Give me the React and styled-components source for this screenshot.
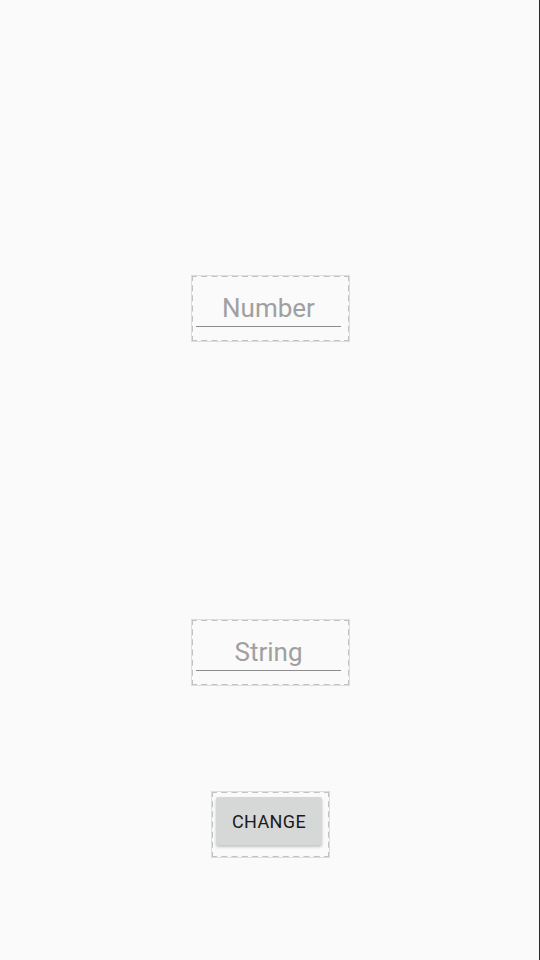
import React from "react";
import styled, { createGlobalStyle } from "styled-components";

const Global = createGlobalStyle`
  html, body { margin: 0; padding: 0; background: #fafafa; }
  body { font-family: Roboto, "Noto Sans", sans-serif; }
`;

const Screen = styled.div`
  width: 540px;
  height: 960px;
  box-sizing: border-box;
  padding-left: 2px;
  border-right: 1px solid #2a2a2a;
  background: #fafafa;
  display: flex;
  flex-direction: column;
  align-items: center;
`;

const Frame = styled.div`
  box-sizing: border-box;
  width: ${(p) => p.$w}px;
  height: 67px;
  margin-top: ${(p) => p.$top}px;
  padding-top: ${(p) => p.$pad}px;
  border: 2px dashed #c2c2c2;
  outline: 1px solid #dddddd;
  outline-offset: -1px;
  display: flex;
  flex-direction: column;
  align-items: center;
`;

const Field = styled.input`
  box-sizing: border-box;
  width: 145px;
  height: 41px;
  margin: 0 4px 0 0;
  border: none;
  border-bottom: 1px solid #8c8c8c;
  background: transparent;
  font-family: Roboto, sans-serif;
  font-size: 26px;
  text-align: center;
  color: #333;
  padding: 4px 0 0;
  outline: none;
  &::placeholder { color: #a0a0a0; }
`;

const Button = styled.button`
  box-sizing: border-box;
  width: 106px;
  height: 48px;
  margin: 0 3px 0 0;
  border: none;
  border-radius: 2px;
  background: #d6d7d7;
  box-shadow: 0 2px 3px rgba(0,0,0,0.22);
  font-family: Roboto, sans-serif;
  font-weight: 400;
  font-size: 18px;
  letter-spacing: 0.4px;
  color: #1a1a1a;
`;

export default function App() {
  return (
    <>
      <Global />
      <Screen>
        <Frame $w={159} $top={275} $pad={9}>
          <Field placeholder="Number" />
        </Frame>
        <Frame $w={159} $top={277} $pad={9}>
          <Field placeholder="String" />
        </Frame>
        <Frame $w={119} $top={105} $pad={4}>
          <Button>CHANGE</Button>
        </Frame>
      </Screen>
    </>
  );
}
